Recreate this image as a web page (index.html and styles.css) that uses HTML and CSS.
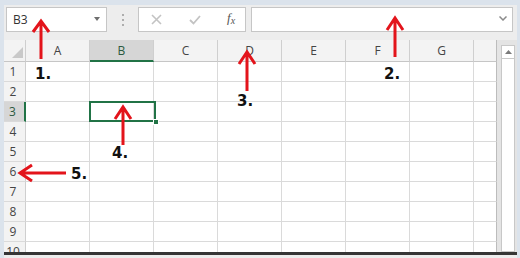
FILE: index.html
```html
<!DOCTYPE html>
<html lang="en">
<head>
    <meta charset="UTF-8">
    <title>Excel Formula Bar</title>
    <link rel="stylesheet" href="styles.css">
</head>
<body>
    <div class="window">
        <div class="formula-row">
            <div class="name-box">
                <span>B3</span>
                <span class="caret"></span>
            </div>
            <div class="grip"><i></i><i></i><i></i></div>
            <div class="fx-box">
                <svg class="btn-cancel" width="11" height="11" viewBox="0 0 11 11">
                    <path d="M1 1 L10 10 M10 1 L1 10" stroke="#c3c3c3" stroke-width="1.6" fill="none"/>
                </svg>
                <svg class="btn-enter" width="12" height="10" viewBox="0 0 12 10">
                    <path d="M1 5 L4.5 8.5 L11 1" stroke="#c3c3c3" stroke-width="1.8" fill="none"/>
                </svg>
                <span class="fx">f<sub>x</sub></span>
            </div>
            <div class="formula-input">
                <svg width="8" height="5" viewBox="0 0 8 5">
                    <path d="M0.5 0.5 L4 4 L7.5 0.5" stroke="#8a8a8a" stroke-width="1.5" fill="none"/>
                </svg>
            </div>
        </div>

        <div class="sheet">
            <div class="grid" id="grid">
                <div class="corner">
                    <svg width="11" height="11" viewBox="0 0 11 11">
                        <polygon points="11,0 11,11 0,11" fill="#c9c9c9"/>
                    </svg>
                </div>
                <!-- header and rows are added below -->
                <div class="selection"><span class="handle"></span></div>
            </div>
            <div class="vscroll">
                <div class="scroll-up">
                    <svg width="7" height="4" viewBox="0 0 7 4">
                        <polygon points="0,4 3.5,0 7,4" fill="#7a7a7a"/>
                    </svg>
                </div>
                <div class="track"></div>
            </div>
        </div>
        <div class="bottom-edge"></div>

        <svg class="arrows" width="520" height="258" viewBox="0 0 520 258">
            <g stroke="#e3141b" stroke-width="3" fill="none">
                <path d="M41 59 V22 M33 32 L41 21 L49 32"/>
                <path d="M395 57 V19 M387 30 L395 18 L403 30"/>
                <path d="M247 91 V54 M239 64 L247 52 L255 64"/>
                <path d="M123 145 V109 M115 119 L123 107 L131 119"/>
                <path d="M66 173 H22 M32 165 L20 173 L32 181"/>
            </g>
        </svg>
        <span class="note note-1">1.</span>
        <span class="note note-2">2.</span>
        <span class="note note-3">3.</span>
        <span class="note note-4">4.</span>
        <span class="note note-5">5.</span>
    </div>

    <script>
        const grid = document.getElementById('grid');
        const selection = grid.querySelector('.selection');
        const columns = ['A', 'B', 'C', 'D', 'E', 'F', 'G', ''];

        columns.forEach(name => {
            const head = document.createElement('div');
            head.className = 'col-head' + (name === 'B' ? ' active' : '');
            head.textContent = name;
            grid.insertBefore(head, selection);
        });

        for (let r = 1; r <= 10; r++) {
            const head = document.createElement('div');
            head.className = 'row-head' + (r === 3 ? ' active' : '');
            head.textContent = r;
            grid.insertBefore(head, selection);
            columns.forEach(() => {
                const cell = document.createElement('div');
                cell.className = 'cell';
                grid.insertBefore(cell, selection);
            });
        }
    </script>
</body>
</html>
```

FILE: styles.css
```css
* {
    margin: 0;
    padding: 0;
    box-sizing: border-box;
}

body {
    font-family: 'Open Sans', 'Noto Sans', sans-serif;
    background-color: #ececec;
}

.window {
    position: relative;
    width: 520px;
    height: 258px;
    overflow: hidden;
    background-color: #ededed;
    border-top: 5px solid #dbe3ec;
    border-left: 4px solid #dbe3ec;
    border-right: 3px solid #dbe3ec;
}

/* formula bar */
.formula-row {
    display: flex;
    height: 25px;
    margin-top: 2px;
    padding-left: 2px;
}

.name-box {
    width: 101px;
    display: flex;
    align-items: center;
    justify-content: space-between;
    padding: 0 6px 0 6px;
    background-color: #fff;
    border: 1px solid #c6c6c6;
    font-size: 12px;
    color: #333;
}

.caret {
    width: 0;
    height: 0;
    border-left: 3.5px solid transparent;
    border-right: 3.5px solid transparent;
    border-top: 4px solid #6e6e6e;
    margin-top: -2px;
}

.grip {
    width: 31px;
    display: flex;
    flex-direction: column;
    align-items: center;
    justify-content: center;
    gap: 3px;
}

.grip i {
    width: 2px;
    height: 2px;
    background-color: #adadad;
}

.fx-box {
    width: 108px;
    display: flex;
    align-items: center;
    background-color: #fff;
    border: 1px solid #c6c6c6;
    padding-left: 12px;
}

.btn-cancel {
    margin-right: 27px;
}

.btn-enter {
    margin-right: 26px;
}

.fx {
    font-family: 'Liberation Serif', serif;
    font-style: italic;
    font-size: 13px;
    color: #555;
    margin-top: -3px;
}

.fx sub {
    font-size: 10px;
    vertical-align: -2px;
}

.formula-input {
    width: 262px;
    margin-left: 5px;
    display: flex;
    align-items: center;
    justify-content: flex-end;
    padding: 0 5px 3px 0;
    background-color: #fff;
    border: 1px solid #c6c6c6;
}

/* worksheet */
.sheet {
    display: flex;
    height: 212px;
    margin-top: 8px;
}

.grid {
    position: relative;
    width: 493px;
    display: grid;
    grid-template-columns: 22px repeat(7, 64px) 23px;
    grid-template-rows: 22px;
    grid-auto-rows: 20px;
    overflow: hidden;
    background-color: #fff;
    font-size: 12px;
    color: #444;
}

.corner,
.col-head,
.row-head {
    background-color: #f3f3f3;
    border-right: 1px solid #cfcfcf;
    border-bottom: 1px solid #c6c6c6;
}

.corner {
    display: flex;
    align-items: flex-end;
    justify-content: flex-end;
    padding: 0 2px 3px 0;
}

.col-head {
    display: flex;
    align-items: center;
    justify-content: center;
}

.col-head:nth-child(9) {
    border-right-color: #bcbcbc;
}

.col-head.active {
    background-color: #d6d6d6;
    border-bottom: 2px solid #217346;
    color: #2c5a40;
}

.row-head {
    display: flex;
    align-items: center;
    justify-content: center;
    padding-right: 3px;
    border-bottom-color: #dadada;
}

.row-head.active {
    background-color: #d6d6d6;
    border-right: 2px solid #217346;
    color: #2c5a40;
}

.cell {
    border-right: 1px solid #dadada;
    border-bottom: 1px solid #dadada;
}

.cell:nth-child(9n + 9) {
    border-right-color: #bcbcbc;
}

.selection {
    position: absolute;
    left: 85px;
    top: 61px;
    width: 67px;
    height: 21px;
    border: 2px solid #217346;
}

.handle {
    position: absolute;
    right: -5px;
    bottom: -5px;
    width: 6px;
    height: 6px;
    background-color: #217346;
    border: 1px solid #fff;
}

.vscroll {
    width: 20px;
    display: flex;
    flex-direction: column;
    padding: 5px 2px 0 4px;
    background-color: #e4e4e4;
}

.scroll-up {
    height: 14px;
    display: flex;
    align-items: center;
    justify-content: center;
    background-color: #fff;
    border: 1px solid #c8c8c8;
}

.track {
    flex: 1;
    background-color: #fff;
    border: 1px solid #c8c8c8;
    border-top: none;
}

.bottom-edge {
    height: 3px;
    background-color: #353535;
}

/* annotations */
.arrows {
    position: absolute;
    top: -5px;
    left: -4px;
}

.note {
    position: absolute;
    font-family: 'DejaVu Sans', sans-serif;
    font-weight: bold;
    font-size: 15px;
    line-height: 15px;
    color: #111;
}

.note-1 { left: 31px; top: 62px; }
.note-2 { left: 380px; top: 62px; }
.note-3 { left: 233px; top: 89px; }
.note-4 { left: 108px; top: 141px; }
.note-5 { left: 67px; top: 162px; }
```
